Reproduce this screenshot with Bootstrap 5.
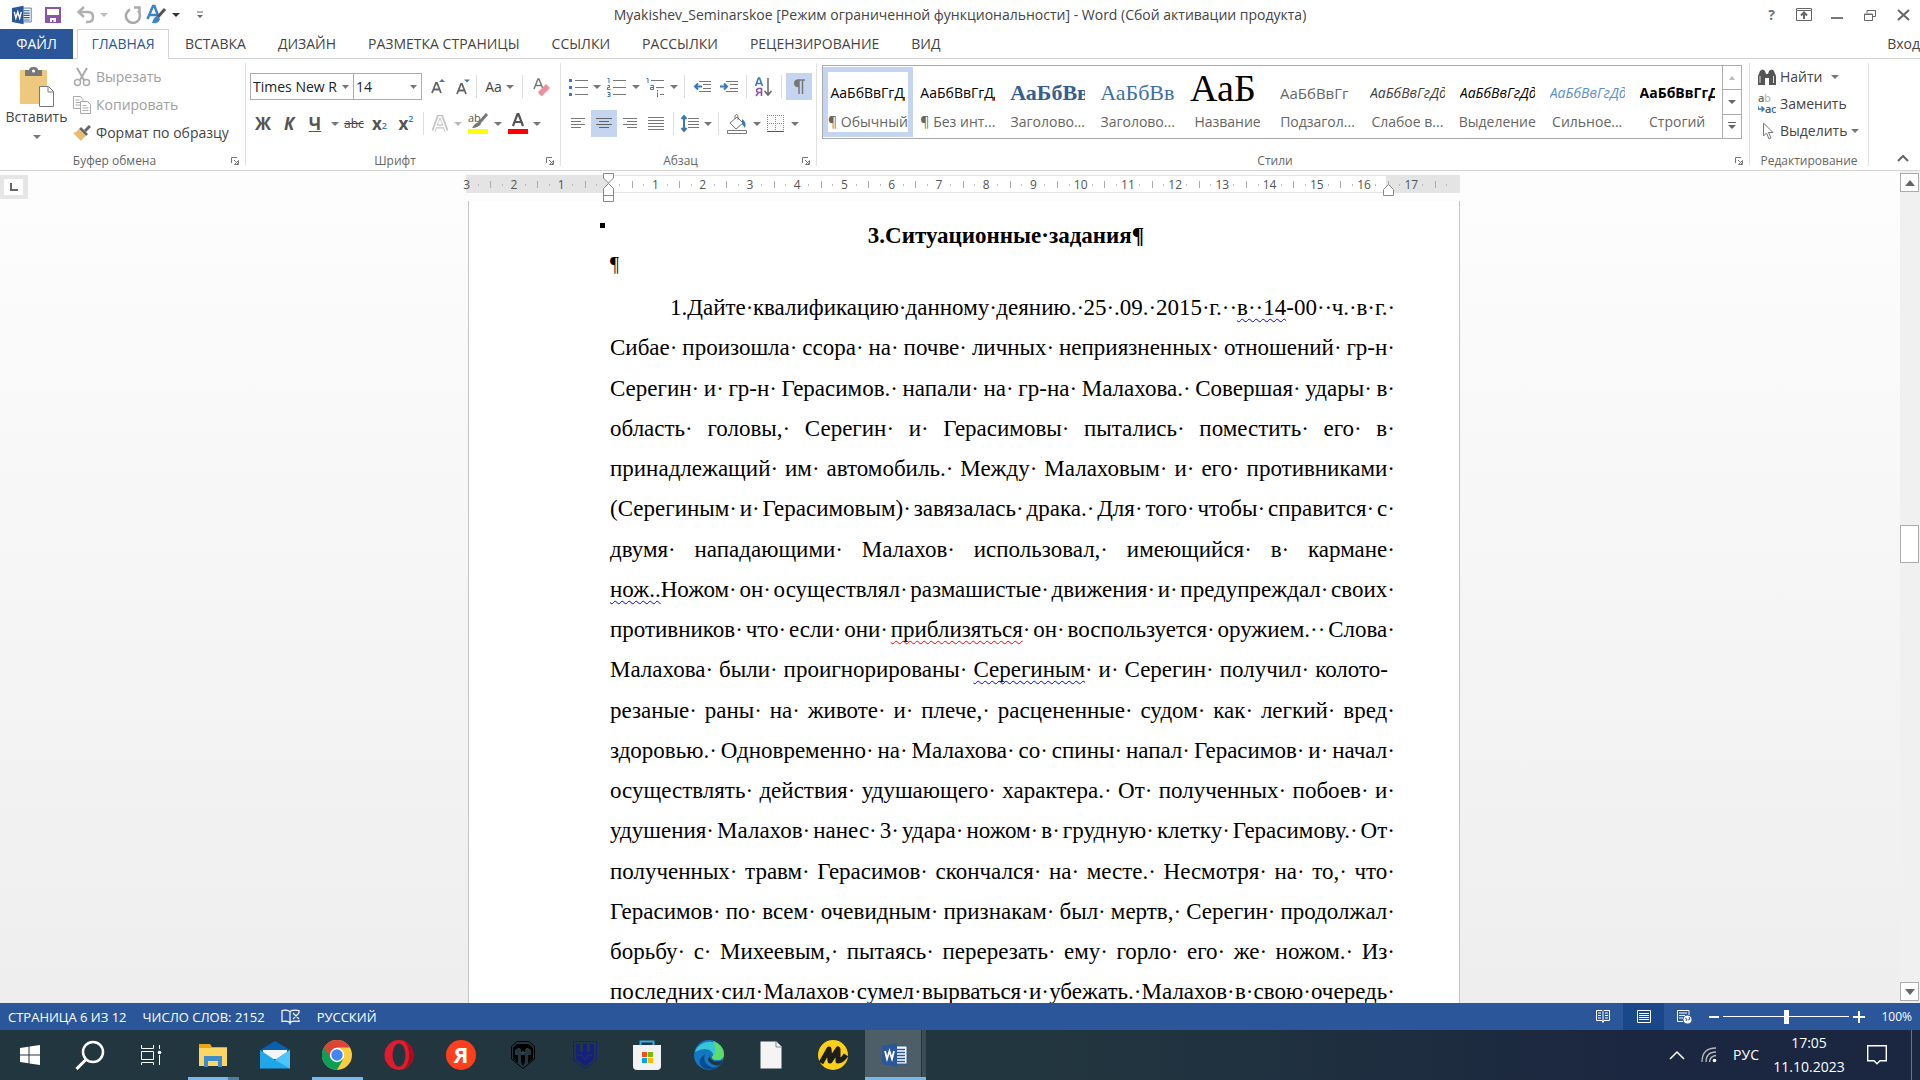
<!DOCTYPE html>
<html lang="ru">
<head>
<meta charset="utf-8">
<meta name="viewport" content="width=device-width, initial-scale=1">
<title>Myakishev_Seminarskoe - Word</title>
<link href="https://cdn.jsdelivr.net/npm/bootstrap@5.3.0/dist/css/bootstrap.min.css" rel="stylesheet">
<style>
body{font-family:"Open Sans","Noto Sans",sans-serif;font-size:14px;line-height:20px;color:#444;background:#fff}
button{font:inherit;color:inherit;background:none;border:0;padding:0;white-space:nowrap}
svg{display:block;flex:none}
.dim{color:#a0a0a0}
.caret-sm{display:inline-block;flex:none;border:4px solid transparent;border-top-color:#777;border-bottom:0}
.caret-sm.dark{border-top-color:#333}
.dim .caret-sm{border-top-color:#bbb}
/* title bar */
.titlebar{height:29px}
.titlebar .side{width:300px}
.w12{width:12px}.w14{width:14px}.w24{width:24px}.w25{width:25px}.w26{width:26px}.w27{width:27px}.w28{width:28px}.w30{width:30px}.w33{width:33px}.w37{width:37px}
/* tabs */
.tabs{height:30px;border-bottom:1px solid #d4d4d4}
.tabs a{color:#444;text-decoration:none;padding:0 16px;line-height:30px;height:30px;white-space:nowrap}
.tabs .file-tab{background:#2b579a;color:#fff;width:73px;margin-right:4px;text-align:center;padding:0}
.tabs .active-tab{color:#2b579a;border:1px solid #d4d4d4;border-bottom-color:#fff;background:#fff;width:92px;text-align:center;line-height:28px;padding:0}
/* ribbon */
.ribbon{height:112px;border-bottom:1px solid #d4d4d4}
.ribbon-sep{width:1px;margin:4px 0;background:#e1e1e1;flex:none}
.grp{flex:none}
.grp-body{height:93px}
.grp-cap{height:18px;font-size:12px;line-height:18px;color:#666;position:relative}
.grp-cap button{position:absolute;right:6px;top:5px}
.g-clip{width:245px}.g-font{width:314px}.g-para{width:255px}.g-edit{width:118px}.g-tail{width:51px}
.tool-rows{padding:14px 0 0 4px;gap:10px}
.tool-row{height:27px}
.tool-row>button{height:27px;display:flex;align-items:center;justify-content:center}
.tool-sep{width:1px;height:23px;margin:0 4px;background:#ddd}
.pressed{background:#c5d5f0}
.tool-row select{height:27px;border:1px solid #ababab;border-radius:0;color:#222;background:#fff url("data:image/svg+xml,%3Csvg xmlns='http://www.w3.org/2000/svg' width='16' height='4'%3E%3Crect width='16' height='4' fill='white'/%3E%3Cpath d='M5 0h7L8.500 4z' fill='%23777'/%3E%3C/svg%3E") no-repeat right 0 center;appearance:none;padding:0 16px 0 2px;line-height:24px}
.sel-font{width:104px}.sel-size{width:69px;margin-left:-1px}
.glyph{font-weight:700;font-size:17px;color:#555}
.glyph sub,.glyph sup{color:#3b78b8;font-size:9px;font-weight:600}
.strike{font-size:12px;text-decoration:line-through}
.paste{width:73px;padding-top:8px}
.clip-list{padding-top:4px}
.clip-list button{height:28px;display:flex;align-items:center;gap:5px}
.gallery{height:74px;margin:6px 7px 0 5px;border:1px solid #ababab}
.style-item{flex:1 1 0;min-width:0;height:70px;margin-top:1px;border:5px solid transparent;display:flex;flex-direction:column;align-items:center;overflow:hidden}
.style-item.chosen{border-color:#c5d5f0}
.preview{height:31px;margin-top:3px;width:75px;overflow:hidden;text-align:left;line-height:36px;font-size:14px;color:#000;white-space:nowrap;flex:none}
.style-name{line-height:18px;margin-top:7px;color:#666}
.pv-h1{font:700 22px/36px "Liberation Serif",serif;color:#365f91}
.pv-h2{font:400 22px/36px "Liberation Serif",serif;color:#3d70a8}
.pv-title{font:400 38px/26px "Liberation Serif",serif}
.pv-sub{font-size:15px;color:#666}
.pv-soft{color:#404040}
.pv-blue{color:#5b8fcb}
.gal-nav{width:19px;border-left:1px solid #ababab}
.gal-nav button{flex:1;display:flex;align-items:center;justify-content:center}
.gal-nav button+button{border-top:1px solid #ababab}
.edit-list{padding:4px 0 0 8px}
.edit-list button{height:27px;display:flex;align-items:center;gap:4px}
/* work area */
.workspace{flex:1 1 0;min-height:0;background:linear-gradient(#fdfdfd,#eee);overflow:hidden}
.tabsel{width:28px;height:24px;margin-top:4px;border:4px solid #e6e6e6;background:#fff;border-right-width:5px}
.canvas-col{width:996px}
.ruler{height:18px;margin:4px 2px 0 0;background:linear-gradient(90deg,#e4e4e4 142px,#fff 142px 920px,#e4e4e4 920px);box-shadow:inset 0 1px #e4e4e4,inset 0 -1px #e4e4e4;position:relative}
.ruler-scale{width:1016px;margin-left:-23px;clip-path:inset(0 0 0 18px)}
.ruler-cell{flex:1 1 0;font-size:12px;line-height:19px;text-align:center;color:#555;height:18px;background:linear-gradient(#aaa,#aaa) 0 6px/1px 7px no-repeat,linear-gradient(#bbb,#bbb) 25% 9px/1px 2px no-repeat,linear-gradient(#bbb,#bbb) 75% 9px/1px 2px no-repeat}
.ruler-cell.tail{flex:0 0 24px;background:linear-gradient(#aaa,#aaa) 0 6px/1px 7px no-repeat,linear-gradient(#bbb,#bbb) 50% 9px/1px 2px no-repeat}
.marker{position:absolute;top:-2px;z-index:1}
.marker-left{left:136px}
.marker-right{left:916px}
.sheet{width:992px;margin:8px 0 0 2px;background:#fff;border:solid #c6c6c6;border-width:0 1px;padding:22px 71px 0 141px;flex:1 1 0;min-height:0;overflow:hidden;font-family:"Liberation Serif",serif;font-size:23px;line-height:1.75;color:#000;position:relative}
.sheet h1{font-family:inherit;font-size:23px;line-height:26px;font-weight:700;text-align:center;margin:0;padding-left:14px}
.sheet .empty-par{font-size:20px;line-height:24px;margin:3px 0 12px}
.bullet-mark{position:absolute;left:131px;top:22px;width:5px;height:5px;background:#000}
.txt-line{display:flex;justify-content:space-between;white-space:nowrap;margin-right:-7px}
.txt-line span{min-width:0}
.txt-line.first{padding-left:60px}
.txt-line.hyph{margin-right:0}
.txt-line em,.txt-line u{font-style:normal;text-decoration:underline wavy 1px #00f;text-underline-offset:3px;text-decoration-skip-ink:none}
.txt-line u{text-decoration-color:#f00}
.scroller{width:20px;background:#f0f0f0;padding:2px 1px 2px 0;position:relative}
.scroller button{width:19px;height:19px;border:1px solid #ababab;background:#fff;display:flex;align-items:center;justify-content:center}
.thumb{position:absolute;left:0;top:42.5%;width:19px;height:38px;border:1px solid #ababab;background:#fff}
/* status bar */
.status{height:27px;background:#2b579a;color:#fff;font-size:13px}
.status .zoom-value{font-size:12px}
.view-on{background:#19478a}
.view-btn{width:41px;height:27px;display:flex;align-items:center;justify-content:center}
.zoomer{width:126px;height:20px;appearance:none;background:linear-gradient(#fff,#fff) center/100% 1px no-repeat;margin:0 4px}
.zoomer::-webkit-slider-thumb{appearance:none;width:5px;height:14px;background:#fff}
/* taskbar */
.taskbar{height:50px;background:linear-gradient(90deg,#22363f 0,#22363f 55%,#1b2740 85%,#1b2740);color:#fff}
.tb{height:50px;width:62px;display:flex;align-items:center;justify-content:center;position:relative}
.tb.sys{width:60px}
.tb.sys.end{width:62px}
.tb.run::after{content:"";position:absolute;bottom:0;left:6px;width:51px;height:3px;background:#76b9ed}
.tb.multi::after{background:linear-gradient(90deg,#76b9ed 40px,#4f7f9f 40px)}
.tb.cur::before{content:"";position:absolute;left:1px;top:0;width:61px;height:50px;background:linear-gradient(90deg,#4d5e66 56px,#263338 56px 57px,#3c4d55 57px)}
.tb.cur::after{left:1px;width:61px}
.tb.cur svg{position:relative}
.tray{font-size:14px}
.tray .clock{width:100px;line-height:24px;text-align:center}
</style>
<script src="https://cdn.jsdelivr.net/npm/bootstrap@5.3.0/dist/js/bootstrap.bundle.min.js"></script>
</head>
<body class="d-flex flex-column vh-100 overflow-hidden">

<svg width="0" height="0" class="position-absolute">
  <symbol id="launch" viewBox="0 0 8 8"><path d="M.5 6V.5H6M3 3l4 4M7.500 3.500v4h-4z" fill="none" stroke="#777"/></symbol>
  <symbol id="wordlogo" viewBox="0 0 26 24"><path d="M13 3h12v18H13z" fill="#fff" stroke="#2b579a"/><path d="M15 6.500h8M15 9.500h8M15 12.500h8M15 15.500h8M15 18.500h8" stroke="#2b579a" stroke-width="1.500"/><path d="M0 3 15 0v24L0 21z" fill="#2b579a"/><path d="m3 8 2 8 2.500-8L10 16l2-8" fill="none" stroke="#fff" stroke-width="1.800"/></symbol>
</svg>

<header class="titlebar d-flex align-items-center justify-content-between">
  <div class="side d-flex align-items-center">
    <svg class="ms-2 ps-1" width="24" height="20"><use href="#wordlogo"/></svg>
    <button aria-label="Сохранить" class="ms-2 ps-1"><svg width="20" height="18" viewBox="0 0 20 18"><path d="M2 2h14v14H2z" fill="#fff" stroke="#8a55a8" stroke-width="2"/><path d="M2 9h14v7H2z" fill="#8a55a8"/><path d="M6 12h6v4H9.500v-2H8v2H6z" fill="#fff"/></svg></button>
    <button aria-label="Отменить" class="ms-2 ps-1 d-flex align-items-center dim gap-1"><svg width="20" height="18" viewBox="0 0 20 18"><path d="M8 1 2.500 6 8 11M3 6h9q5 0 5 5t-5 5h-2" fill="none" stroke="#b0b0b0" stroke-width="2.500"/></svg><span class="caret-sm"></span></button>
    <button aria-label="Повторить" class="ms-3"><svg width="18" height="18" viewBox="0 0 18 18"><path d="M6 3.500A7 7 0 1 0 14 5M10 1.500h5.500V7" fill="none" stroke="#aaa" stroke-width="2.500"/></svg></button>
    <button aria-label="Стиль текста" class="ms-1 d-flex align-items-center gap-1"><svg width="22" height="21" viewBox="0 0 22 21"><path d="m1.500 15 5.500-13h1.500l4 11M4 11h7" fill="none" stroke="#3d85c6" stroke-width="2.500"/><path d="m19 5-8 9" stroke="#555" stroke-width="3"/><path d="M12 12q-4 0-6 7 7 1 8-4z" fill="#3d85c6"/></svg><span class="caret-sm dark"></span></button>
    <button aria-label="Настроить панель" class="ms-3"><svg width="8" height="8" viewBox="0 0 8 8"><path d="M1 1h6" stroke="#666"/><path d="M1 4h6L4 7z" fill="#666"/></svg></button>
  </div>
  <div class="text-nowrap">Myakishev_Seminarskoe [Режим ограниченной функциональности] - Word (Сбой активации продукта)</div>
  <div class="side d-flex align-items-center justify-content-end text-secondary">
    <button class="w33 fw-bold" aria-label="Справка">?</button>
    <button class="w33" aria-label="Параметры ленты"><svg class="mx-auto" width="16" height="13" viewBox="0 0 16 13"><path d="M.5.5h15v12H.5zM.5 2.500h15" fill="none" stroke="#666"/><path d="M8 11V5M5 7.500 8 4.500l3 3" fill="none" stroke="#666" stroke-width="2"/></svg></button>
    <button class="w33" aria-label="Свернуть"><svg class="mx-auto" width="12" height="13"><path d="M0 9h12v2H0z" fill="#777"/></svg></button>
    <button class="w33" aria-label="Восстановить"><svg class="mx-auto" width="12" height="12" viewBox="0 0 12 12"><path d="M3 4V1.500h8.500v6H9M.5 5h8v6.500h-8zM3 1.500h9M0 5.500h9" fill="none" stroke="#666"/></svg></button>
    <button class="w33" aria-label="Закрыть"><svg class="mx-auto" width="13" height="12" viewBox="0 0 13 12"><path d="m1 1 11 10M12 1 1 11" stroke="#666" stroke-width="2"/></svg></button>
  </div>
</header>

<nav class="tabs d-flex">
  <a class="file-tab" href="#">ФАЙЛ</a><a class="active-tab" href="#">ГЛАВНАЯ</a><a href="#">ВСТАВКА</a><a href="#">ДИЗАЙН</a><a href="#">РАЗМЕТКА СТРАНИЦЫ</a><a href="#">ССЫЛКИ</a><a href="#">РАССЫЛКИ</a><a href="#">РЕЦЕНЗИРОВАНИЕ</a><a href="#">ВИД</a>
  <a href="#" class="ms-auto p-0">Вход</a>
</nav>

<section class="ribbon d-flex">
  <div class="grp g-clip">
    <div class="grp-body d-flex">
      <button class="paste d-flex flex-column align-items-center">
        <svg width="36" height="40" viewBox="0 0 36 40"><rect x="1" y="3" width="27" height="34" rx="1" fill="#edc87e"/><path d="M6 3h4q0-3 4.500-3T19 3h4v6H6z" fill="#777"/><circle cx="14.500" cy="4" r="1.500" fill="#fff"/><path d="M20.500 19.500h9l5 5v15h-14z" fill="#fff" stroke="#777"/><path d="M29 20v5h5" fill="none" stroke="#777"/></svg>
        <span>Вставить</span><span class="caret-sm mt-2"></span>
      </button>
      <div class="clip-list">
        <button class="dim"><svg width="18" height="20" viewBox="0 0 18 20"><path d="M4 1l7 12M14 1 7 13" stroke="#aaa" stroke-width="2"/><circle cx="4.500" cy="15.500" r="3" fill="none" stroke="#aaa" stroke-width="1.500"/><circle cx="13.500" cy="15.500" r="3" fill="none" stroke="#aaa" stroke-width="1.500"/></svg>Вырезать</button>
        <button class="dim"><svg width="18" height="18" viewBox="0 0 18 18"><path d="M.5.5h7l2.500 3v9H.5zM2.500 4h4M2.500 6.500h5M2.500 9h5" fill="#fff" stroke="#aaa"/><path d="M7.500 5.500h7l3 3v9h-10zM9.500 9.500h4M9.500 12h6M9.500 14.500h6" fill="#fff" stroke="#aaa"/></svg>Копировать</button>
        <button><svg width="18" height="16" viewBox="0 0 18 16"><path d="m17 1-5 5" stroke="#666" stroke-width="3"/><path d="m8 2 7 7-2 2-7-7z" fill="#666"/><path d="m6 4 7 7q-3 2-5 5L0 8q4-1 6-4z" fill="#e8bd72"/></svg>Формат по образцу</button>
      </div>
    </div>
    <div class="grp-cap text-center pe-3">Буфер обмена<button aria-label="Буфер обмена"><svg width="8" height="8"><use href="#launch"/></svg></button></div>
  </div>
  <div class="ribbon-sep"></div>
  <div class="grp g-font">
    <div class="grp-body tool-rows d-flex flex-column">
      <div class="tool-row d-flex align-items-center">
        <select class="sel-font" aria-label="Шрифт"><option>Times New R</option></select><select class="sel-size me-1" aria-label="Размер"><option>14</option></select>
        <button class="w25" aria-label="Увеличить"><svg width="16" height="18" viewBox="0 0 16 18"><path d="m1 15 4-10h1l4 10M3 11.500h5" fill="none" stroke="#666" stroke-width="1.800"/><path d="M8 4h6l-3-3z" fill="#3b78b8"/></svg></button>
        <button class="w25" aria-label="Уменьшить"><svg width="16" height="18" viewBox="0 0 16 18"><path d="m1 16 4-10h1l4 10M3 12.500h5" fill="none" stroke="#666" stroke-width="1.800"/><path d="M8 1.500h6l-3 3z" fill="#3b78b8"/></svg></button>
        <span class="tool-sep ms-0"></span>
        <button class="w37 gap-1">Aa<span class="caret-sm"></span></button>
        <span class="tool-sep"></span>
        <button class="w30" aria-label="Очистить"><svg width="18" height="20" viewBox="0 0 18 20"><path d="m1 12 4-10h1l4 10M3 8.500h5" fill="none" stroke="#777" stroke-width="1.500"/><path d="m5 15 8-8 4 4-8 8q-3-1-4-4z" fill="#ee8f9d"/></svg></button>
      </div>
      <div class="tool-row d-flex align-items-center">
        <button class="w26 glyph">Ж</button><button class="w26 glyph fst-italic">К</button><button class="w26 glyph text-decoration-underline">Ч</button><button class="w14" aria-label="Подчёркивание"><span class="caret-sm"></span></button>
        <button class="w24 strike">abc</button>
        <button class="w27 glyph">x<sub>2</sub></button><button class="w26 glyph">x<sup>2</sup></button>
        <span class="tool-sep"></span>
        <button class="w24" aria-label="Эффекты"><svg width="18" height="20" viewBox="0 0 18 20"><path d="m2.500 17 5-14h3l5 14M5 12.500h8" fill="none" stroke="#c4c4c4" stroke-width="4"/><path d="m3 17 5-14h2l5 14M5 12.500h8" fill="none" stroke="#fff" stroke-width="1.500"/></svg></button><button class="w12 dim" aria-label="Ещё"><span class="caret-sm"></span></button>
        <button class="w28" aria-label="Выделение цветом"><svg width="22" height="23" viewBox="0 0 22 23"><text x="1" y="10" font-size="11" fill="#555">ab</text><path d="m20 2-8 9" stroke="#777" stroke-width="3"/><path d="M13 10q-5 0-8 6 6 0 9-4z" fill="#777"/><path d="M1 17h20v5H1z" fill="#ff0"/></svg></button><button class="w12" aria-label="Ещё"><span class="caret-sm"></span></button>
        <button class="w27" aria-label="Цвет текста"><svg width="20" height="23" viewBox="0 0 20 23"><path d="m5 14 4.500-12h1L15 14M6.500 10h7" fill="none" stroke="#555" stroke-width="2.200"/><path d="M0 17h20v5H0z" fill="red"/></svg></button><button class="w12" aria-label="Ещё"><span class="caret-sm"></span></button>
      </div>
    </div>
    <div class="grp-cap text-center pe-3">Шрифт<button aria-label="Шрифт"><svg width="8" height="8"><use href="#launch"/></svg></button></div>
  </div>
  <div class="ribbon-sep"></div>
  <div class="grp g-para">
    <div class="grp-body tool-rows d-flex flex-column">
      <div class="tool-row d-flex align-items-center">
        <button class="w26" aria-label="Маркеры"><svg width="19" height="18" viewBox="0 0 19 18"><path d="M6 2.500h13M6 9.500h13M6 16.500h13" stroke="#777"/><path d="M0 1h3v3H0zM0 8h3v3H0zM0 15h3v3H0z" fill="#3b78b8"/></svg></button><button class="w12" aria-label="Ещё"><span class="caret-sm"></span></button>
        <button class="w27" aria-label="Нумерация"><svg width="19" height="20" viewBox="0 0 19 20"><path d="M6 3.500h13M6 10.500h13M6 17.500h13" stroke="#777"/><path d="M.5 1.500H2V6M.5 8.500h2v2h-2v2h3M.5 15.500h2.500v4H.5M1 17.500h2" fill="none" stroke="#3b78b8"/></svg></button><button class="w12" aria-label="Ещё"><span class="caret-sm"></span></button>
        <button class="w26" aria-label="Многоуровневый список"><svg width="19" height="20" viewBox="0 0 19 20"><path d="M5 3.500h13M10 10.500h8M14 17.500h4" stroke="#777"/><path d="M.5 1.500H2V6M4.500 8.500h3v4h-3v-2h3M11.500 13v1.500M11.500 15.500V20" fill="none" stroke="#3b78b8"/></svg></button><button class="w12" aria-label="Ещё"><span class="caret-sm"></span></button>
        <span class="tool-sep"></span>
        <button class="w27" aria-label="Уменьшить отступ"><svg width="19" height="13" viewBox="0 0 19 13"><path d="M6 1.500h12M10 4.500h8M10 8.500h8M6 11.500h12" stroke="#777"/><path d="M9 6.500H2M5 3.500l-3 3 3 3" fill="none" stroke="#3b78b8" stroke-width="2"/></svg></button>
        <button class="w26" aria-label="Увеличить отступ"><svg width="19" height="13" viewBox="0 0 19 13"><path d="M6 1.500h12M10 4.500h8M10 8.500h8M6 11.500h12" stroke="#777"/><path d="M0 6.500h7M4 3.500l3 3-3 3" fill="none" stroke="#3b78b8" stroke-width="2"/></svg></button>
        <span class="tool-sep"></span>
        <button class="w26" aria-label="Сортировка"><svg width="18" height="20" viewBox="0 0 18 20"><path d="m.5 9 3-8h1l3 8M2 6.500h4" fill="none" stroke="#3b78b8" stroke-width="1.600"/><path d="M6.500 19v-7.500H3.500q-2 .5-2 2t2 2h3M3.500 15.500 1 19" fill="none" stroke="#8a55a8" stroke-width="1.600"/><path d="M13 1v17M9.500 14l3.500 4 3.500-4" fill="none" stroke="#666" stroke-width="1.500"/></svg></button>
        <span class="tool-sep"></span>
        <button class="w26 pressed" aria-label="Знаки"><svg width="12" height="16" viewBox="0 0 12 16"><path d="M6 1v14M9.500 1v14M5 1h7" stroke="#777" stroke-width="1.500"/><path d="M6 .3v8Q1 8.500 1 4.300T6 .3z" fill="#777"/></svg></button>
      </div>
      <div class="tool-row d-flex align-items-center">
        <button class="w26" aria-label="По левому краю"><svg width="15" height="13" viewBox="0 0 15 13"><path d="M0 1.500h14M0 4.500h10M0 7.500h14M0 10.500h10" stroke="#777"/></svg></button>
        <button class="w26 pressed" aria-label="По центру"><svg width="16" height="13" viewBox="0 0 16 13"><path d="M0 1.500h16M3 4.500h10M0 7.500h16M3 10.500h10" stroke="#666"/></svg></button>
        <button class="w26" aria-label="По правому краю"><svg width="15" height="13" viewBox="0 0 15 13"><path d="M0 1.500h14M4 4.500h10M0 7.500h14M4 10.500h10" stroke="#777"/></svg></button>
        <button class="w26" aria-label="По ширине"><svg width="16" height="14" viewBox="0 0 16 14"><path d="M0 .5h16M0 3.500h16M0 6.500h16M0 9.500h16M0 12.500h16" stroke="#777"/></svg></button>
        <span class="tool-sep"></span>
        <button class="w24" aria-label="Интервал"><svg width="18" height="19" viewBox="0 0 18 19"><path d="M7 4.500h11M7 7.500h11M7 10.500h11M7 13.500h11" stroke="#777"/><path d="M3 2v15M.5 5 3 2l2.500 3M.5 14 3 17l2.500-3" fill="none" stroke="#3b78b8" stroke-width="2"/></svg></button><button class="w12" aria-label="Ещё"><span class="caret-sm"></span></button>
        <span class="tool-sep"></span>
        <button class="w28" aria-label="Заливка"><svg width="20" height="20" viewBox="0 0 20 20"><path d="m3 9 7-6 6 6-7 6zM8 5V1.500q2-2 3 0V6" fill="#fff" stroke="#777"/><path d="M15 5q5 3 3 9l-3-4z" fill="#3b78b8"/><path d="M.5 16.500h19v3H.5z" fill="#fff" stroke="#777"/></svg></button><button class="w12" aria-label="Ещё"><span class="caret-sm"></span></button>
        <button class="w26" aria-label="Границы"><svg width="18" height="18" viewBox="0 0 18 18"><path d="M.5 0v16M8.500 0v16M16.500 0v16M0 .5h17M0 8.500h17" stroke="#888" stroke-dasharray="1 1"/><path d="M0 16.500h17" stroke="#555"/></svg></button><button class="w12" aria-label="Ещё"><span class="caret-sm"></span></button>
      </div>
    </div>
    <div class="grp-cap text-center pe-3">Абзац<button aria-label="Абзац"><svg width="8" height="8"><use href="#launch"/></svg></button></div>
  </div>
  <div class="ribbon-sep"></div>
  <div class="flex-fill">
    <div class="grp-body overflow-hidden">
      <div class="gallery d-flex">
        <div class="d-flex flex-fill">
          <button class="style-item chosen"><span class="preview">АаБбВвГгДд</span><span class="style-name">¶ Обычный</span></button>
          <button class="style-item"><span class="preview">АаБбВвГгДд</span><span class="style-name">¶ Без инт...</span></button>
          <button class="style-item"><span class="preview pv-h1">АаБбВв</span><span class="style-name">Заголово...</span></button>
          <button class="style-item"><span class="preview pv-h2">АаБбВв</span><span class="style-name">Заголово...</span></button>
          <button class="style-item"><span class="preview pv-title">АаБ</span><span class="style-name">Название</span></button>
          <button class="style-item"><span class="preview pv-sub">АаБбВвГг</span><span class="style-name">Подзагол...</span></button>
          <button class="style-item"><span class="preview fst-italic pv-soft">АаБбВвГгДд</span><span class="style-name">Слабое в...</span></button>
          <button class="style-item"><span class="preview fst-italic">АаБбВвГгДд</span><span class="style-name">Выделение</span></button>
          <button class="style-item"><span class="preview fst-italic pv-blue">АаБбВвГгДд</span><span class="style-name">Сильное...</span></button>
          <button class="style-item"><span class="preview fw-bold">АаБбВвГгДд</span><span class="style-name">Строгий</span></button>
        </div>
        <div class="gal-nav d-flex flex-column">
          <button aria-label="Вверх"><svg width="8" height="4"><path d="M1 4h6L4 0z" fill="#bbb"/></svg></button>
          <button aria-label="Вниз"><svg width="8" height="4"><path d="M0 0h8L4 4z" fill="#666"/></svg></button>
          <button aria-label="Ещё"><svg width="8" height="8"><path d="M0 0h8v1H0zM0 3h8L4 7z" fill="#666"/></svg></button>
        </div>
      </div>
    </div>
    <div class="grp-cap text-center pe-3">Стили<button aria-label="Стили"><svg width="8" height="8"><use href="#launch"/></svg></button></div>
  </div>
  <div class="ribbon-sep"></div>
  <div class="grp g-edit">
    <div class="grp-body edit-list">
      <button><svg width="18" height="16" viewBox="0 0 18 16"><path d="M0 16V7l2-5q3-3 5 0l1 3h2l1-3q3-3 5 0l2 5v9h-7V9H7v7z" fill="#555"/><path d="M2 7v7M15.500 7v7" stroke="#ddd"/></svg>Найти<span class="caret-sm ms-1"></span></button>
      <button><svg width="18" height="20" viewBox="0 0 18 20"><g font-size="11" font-weight="600"><text y="8" fill="#666">a</text><text x="6" y="8" fill="#bbb">b</text><text x="7" y="19" fill="#555">a</text><text x="13" y="19" fill="#3b78b8">c</text></g><path d="M0 12v3h5M3.500 12.500l2.500 2.500-2.500 2.500" fill="none" stroke="#3b78b8" stroke-width="1.500"/></svg>Заменить</button>
      <button><svg width="18" height="18" viewBox="0 0 18 18"><path d="M5.500 1v13l3-3 2.500 6 2-1-2.500-5.500H15z" fill="#fff" stroke="#777"/></svg>Выделить<span class="caret-sm"></span></button>
    </div>
    <div class="grp-cap text-center">Редактирование</div>
  </div>
  <div class="ribbon-sep"></div>
  <div class="grp g-tail d-flex align-items-end justify-content-center pb-1 ps-3"><button aria-label="Свернуть ленту"><svg width="12" height="12" viewBox="0 0 12 12"><path d="m1 7 5-5 5 5" fill="none" stroke="#666" stroke-width="2"/></svg></button></div>
</section>

<main class="workspace d-flex justify-content-between">
  <button class="tabsel d-flex align-items-center justify-content-center" aria-label="Табуляция"><svg width="8" height="8"><path d="M0 0h2v6h6v2H0z" fill="#666"/></svg></button>
  <div class="canvas-col d-flex flex-column">
    <div class="ruler">
      <div class="ruler-scale d-flex" id="scale"></div>
      <svg class="marker marker-left" width="13" height="30" viewBox="0 0 13 30"><path d="M1.500.5h10V5l-5 5-5-5zM1.500 28.500v-13l5-5 5 5v13zM1.500 22.500h10" fill="#fff" stroke="#888"/></svg>
      <svg class="marker marker-right" width="13" height="30" viewBox="0 0 13 30"><path d="M1.500 22.500v-6l5-5 5 5v6z" fill="#fff" stroke="#888"/></svg>
    </div>
    <article class="sheet">
      <span class="bullet-mark"></span>
      <h1>3.Ситуационные·задания¶</h1>
      <div class="empty-par">¶</div>
      <div class="txt-line first">1.Дайте квалификацию данному деянию. 25 .09. 2015 г.· <em>в··14</em>-00· ч. в г. </div>
      <div class="txt-line">Сибае произошла ссора на почве личных неприязненных отношений гр-н </div>
      <div class="txt-line">Серегин и гр-н Герасимов. напали на гр-на Малахова. Совершая удары в </div>
      <div class="txt-line">область головы, Серегин и Герасимовы пытались поместить его в </div>
      <div class="txt-line">принадлежащий им автомобиль. Между Малаховым и его противниками </div>
      <div class="txt-line">(Серегиным и Герасимовым) завязалась драка. Для того чтобы справится с </div>
      <div class="txt-line">двумя нападающими Малахов использовал, имеющийся в кармане </div>
      <div class="txt-line"><em>нож..</em>Ножом он осуществлял размашистые движения и предупреждал своих </div>
      <div class="txt-line">противников что если они <u>приблизяться</u> он воспользуется оружием.· Слова </div>
      <div class="txt-line hyph">Малахова были проигнорированы <em>Серегиным</em> и Серегин получил колото-</div>
      <div class="txt-line">резаные раны на животе и плече, расцененные судом как легкий вред </div>
      <div class="txt-line">здоровью. Одновременно на Малахова со спины напал Герасимов и начал </div>
      <div class="txt-line">осуществлять действия удушающего характера. От полученных побоев и </div>
      <div class="txt-line">удушения Малахов нанес 3 удара ножом в грудную клетку Герасимову. От </div>
      <div class="txt-line">полученных травм Герасимов скончался на месте. Несмотря на то, что </div>
      <div class="txt-line">Герасимов по всем очевидным признакам был мертв, Серегин продолжал </div>
      <div class="txt-line">борьбу с Михеевым, пытаясь перерезать ему горло его же ножом. Из </div>
      <div class="txt-line">последних сил Малахов сумел вырваться и убежать. Малахов в свою очередь </div>
    </article>
  </div>
  <div class="scroller d-flex flex-column justify-content-between">
    <button aria-label="Прокрутить вверх"><svg width="10" height="6"><path d="M0 6h10L5 0z" fill="#666"/></svg></button>
    <span class="thumb"></span>
    <button aria-label="Прокрутить вниз"><svg width="10" height="6"><path d="M0 0h10L5 6z" fill="#666"/></svg></button>
  </div>
</main>

<footer class="status d-flex align-items-center justify-content-between">
  <div class="d-flex align-items-center ps-2 text-nowrap">
    <span class="me-3">СТРАНИЦА 6 ИЗ 12</span><span class="me-3">ЧИСЛО СЛОВ: 2152</span>
    <svg class="me-3" width="20" height="16" viewBox="0 0 20 16"><path d="M9 2.500q-4-2-8-1v11q4-1 8 1 3-2 9-1M9 2.500v13M9 2.500q3-2 9-1V4M18 11v2M12 4l6 6M18 4l-6 6" fill="none" stroke="#fff" stroke-width="1.200"/></svg>
    <span>РУССКИЙ</span>
  </div>
  <div class="d-flex align-items-center pe-2">
    <button class="view-btn" aria-label="Чтение"><svg width="14" height="13" viewBox="0 0 14 13"><path d="M.5.5H6l1 1 1-1h5.500v10H8l-1 2-1-2H.5zM7 2v9M2 3h3M2 5.500h3M2 8h3M9 3h3M9 5.500h3M9 8h3" fill="none" stroke="#fff"/></svg></button>
    <button class="view-btn view-on" aria-label="Разметка"><svg width="14" height="13" viewBox="0 0 14 13"><path d="M.5.5h13v12H.5zM2 3.500h10M2 5.500h10M2 7.500h10M2 9.500h10" fill="none" stroke="#fff"/></svg></button>
    <button class="view-btn" aria-label="Веб"><svg width="15" height="14" viewBox="0 0 15 14"><path d="M12 5V.5H.5v11H6M2 3h8M2 5.500h6M2 8h4" fill="none" stroke="#fff"/><circle cx="10.500" cy="9.500" r="4" fill="#fff"/><path d="m8 8 2 1-1 2M12 7l1 2-2 1" fill="none" stroke="#2b579a"/></svg></button>
    <button aria-label="Мельче" class="ms-1"><svg width="10" height="12"><path d="M0 5h10v2H0z" fill="#fff"/></svg></button>
    <input class="zoomer" type="range" min="10" max="190" value="100" aria-label="Масштаб">
    <button aria-label="Крупнее" class="me-3"><svg width="12" height="12"><path d="M0 5h12v2H0zM5 0h2v12H5z" fill="#fff"/></svg></button>
    <span class="zoom-value">100%</span>
  </div>
</footer>

<footer class="taskbar d-flex justify-content-between">
  <div class="d-flex">
    <button class="tb sys" aria-label="Пуск"><svg width="20" height="20" viewBox="0 0 20 20"><path d="M0 3l8.500-1.200v7.700H0zM9.500 1.600 20 0v9.500H9.500zM0 10.500h8.500v7.700L0 17zM9.500 10.500H20V20L9.500 18.400z" fill="#fff"/></svg></button>
    <button class="tb sys" aria-label="Поиск"><svg width="30" height="30" viewBox="0 0 30 30"><circle cx="18" cy="12" r="10" fill="none" stroke="#fff" stroke-width="2.500"/><path d="M11 19.500 1.500 29" stroke="#fff" stroke-width="3"/></svg></button>
    <button class="tb sys end" aria-label="Представление задач"><svg width="22" height="20" viewBox="0 0 22 20"><path d="M1.500 0v3.500h12V0M1.500 6.500h12v8h-12zM1.500 20v-2.500h12V20M19.500 0v4M19.500 10v10" fill="none" stroke="#fff"/><circle cx="19.500" cy="7.500" r="1.800" fill="#fff"/></svg></button>
    <button class="tb run multi" aria-label="Проводник"><svg width="28" height="24" viewBox="0 0 28 24"><path d="M0 1h11l2 3h15v19H0z" fill="#e8a910"/><path d="M0 5h28v18H0z" fill="#fcd663"/><path d="M5 24V13h18v11h-4v-6H9v6z" fill="#3f8cc9"/></svg></button>
    <button class="tb" aria-label="Почта"><svg width="30" height="28" viewBox="0 0 30 28"><path d="M0 9 15 0l15 9v4H0z" fill="#0a5fae"/><path d="M3 9h24v9H3z" fill="#f3f6f8"/><path d="M0 9l15 10L30 9v18.500H0z" fill="#22a6ea"/><path d="m15 19 15 8.500V9z" fill="#4ec4fb"/></svg></button>
    <button class="tb run" aria-label="Chrome"><svg width="30" height="30" viewBox="0 0 30 30"><circle cx="15" cy="15" r="15" fill="#ffcd40"/><path d="M2 7.500A15 15 0 0 0 15 30l6.500-11.200L15 15z" fill="#0f9d58"/><path d="M2 7.500a15 15 0 0 1 26 0H15l-6 11z" fill="#db4437"/><circle cx="15" cy="15" r="7.200" fill="#fff"/><circle cx="15" cy="15" r="5.700" fill="#4285f4"/></svg></button>
    <button class="tb" aria-label="Opera"><svg width="30" height="30" viewBox="0 0 30 30"><ellipse cx="15" cy="15" rx="14.500" ry="15" fill="#e01b2e"/><path d="M20 1a15 15 0 0 1 0 28q5-5 5-14T20 1z" fill="#a70e1d"/><ellipse cx="15" cy="15" rx="6.500" ry="11.500" fill="#22363f"/></svg></button>
    <button class="tb" aria-label="Яндекс"><svg width="30" height="30" viewBox="0 0 30 30"><circle cx="15" cy="15" r="15" fill="#fc3f1d"/><text x="15" y="23" font-size="22" font-weight="700" text-anchor="middle" fill="#fff">Я</text></svg></button>
    <button class="tb" aria-label="Игра"><svg width="24" height="28" viewBox="0 0 24 28"><path d="M6 .5h12l5.500 5V18L12 27.500.5 18V5.500z" fill="none" stroke="#000"/><path d="M6 3h12l4 4v11l-5 4v-8h3V9l-3-2h-2l-1 2v12l-2 4-2-4V9L9 7H7L4 9v5h3v8l-5-4V7z" fill="#000"/><path d="m12 9 1 2h2l-1.500 1.500.5 2-2-1-2 1 .5-2L9 11h2z" fill="#33464e"/></svg></button>
    <button class="tb" aria-label="Корабли"><svg width="24" height="28" viewBox="0 0 24 28"><path d="M.5.5h23V19L12 27.500.5 19z" fill="none" stroke="#14207d"/><path d="M3 3h4v8h3V3h4v8h3V3h4v15l-9 7-9-7z" fill="#14207d"/><path d="M5 14h4l3 5 3-5h4" fill="none" stroke="#26384a"/></svg></button>
    <button class="tb" aria-label="Store"><svg width="30" height="30" viewBox="0 0 30 30"><path d="M8.500 6V1.500h13V6" fill="none" stroke="#35a9e0" stroke-width="2"/><path d="M1 5h28v21q0 4-4 4H5q-4 0-4-4z" fill="#f2f2f2"/><path d="M10 12h5v5h-5z" fill="#f25022"/><path d="M16 12h5v5h-5z" fill="#7fba00"/><path d="M10 18h5v5h-5z" fill="#00a4ef"/><path d="M16 18h5v5h-5z" fill="#ffb900"/></svg></button>
    <button class="tb" aria-label="Edge"><svg width="30" height="30" viewBox="0 0 30 30"><circle cx="15" cy="15" r="15" fill="#1377c4"/><path d="M1 12A15 15 0 0 1 30 14q0 6-7 6-5 0-5-3 2-2 0-5-6-6-17 0z" fill="#36c6d8"/><path d="M19 1q11 4 11 13 0 6-7 6-5 0-5-3 6-5 1-16z" fill="#5edb6a"/><path d="M11 14q-3 9 6 13 5 1 9-2-9 8-18 2-6-7 3-13z" fill="#0c4a8f"/><path d="M18 20q4 3 11 0l-3 5q-8 2-12-5l2-5q0 4 2 5z" fill="#22363f"/></svg></button>
    <button class="tb" aria-label="Файл"><svg width="22" height="28" viewBox="0 0 22 28"><path d="M.5.500h16l5 5v22H.5z" fill="#f4f4f4"/><path d="M16 1v5h5" fill="none" stroke="#888"/></svg></button>
    <button class="tb" aria-label="Маркет"><svg width="30" height="30" viewBox="0 0 30 30"><circle cx="15" cy="15" r="15" fill="#fccf1b"/><path d="M3 23 11 9l1 12 8-12 0 12q4 0 8-6" fill="none" stroke="#1d1d1b" stroke-width="5" stroke-linejoin="round"/></svg></button>
    <button class="tb run cur" aria-label="Word"><svg width="26" height="26"><use href="#wordlogo"/></svg></button>
  </div>
  <div class="tray d-flex align-items-center">
    <button aria-label="Скрытые значки" class="me-3"><svg width="16" height="10"><path d="m1 9 7-7 7 7" fill="none" stroke="#fff" stroke-width="1.500"/></svg></button>
    <svg class="me-3" width="16" height="16" viewBox="0 0 16 16"><path d="M1 15Q1 1 15 1M5 15q0-10 10-10M8.500 15Q9 9 15 8.500" fill="none" stroke="#bbb" stroke-width="1.300"/><circle cx="13.500" cy="13.500" r="1.800" fill="#fff"/></svg>
    <span>РУС</span>
    <div class="clock"><div>17:05</div><div>11.10.2023</div></div>
    <button aria-label="Уведомления" class="ms-2"><svg width="20" height="20" viewBox="0 0 20 20"><path d="M.7.7h18.600v15H13l-3 3-3-3H.7z" fill="none" stroke="#fff" stroke-width="1.400"/></svg></button>
    <span class="ms-4 me-2 border-start border-secondary align-self-stretch"></span>
  </div>
</footer>

<script>
// Ruler: centimetres left and right of the zero mark
const scale = document.getElementById('scale');
for (let n = -3; n <= 17; n++) {
  const cell = document.createElement('span');
  cell.className = 'ruler-cell';
  cell.textContent = n === 0 ? '' : Math.abs(n);
  scale.append(cell);
}
const tail = document.createElement('span');
tail.className = 'ruler-cell tail';
scale.append(tail);
// Non-printing marks: every space becomes a middle dot that stays with its word
document.querySelectorAll('.txt-line').forEach(line => {
  const end = line.classList.contains('hyph') ? '' : '·';
  const words = line.innerHTML.trim().split(' ');
  line.innerHTML = words.map((w, i) => `<span>${w}${i < words.length - 1 ? '·' : end}</span>`).join('');
});
</script>
</body>
</html>
